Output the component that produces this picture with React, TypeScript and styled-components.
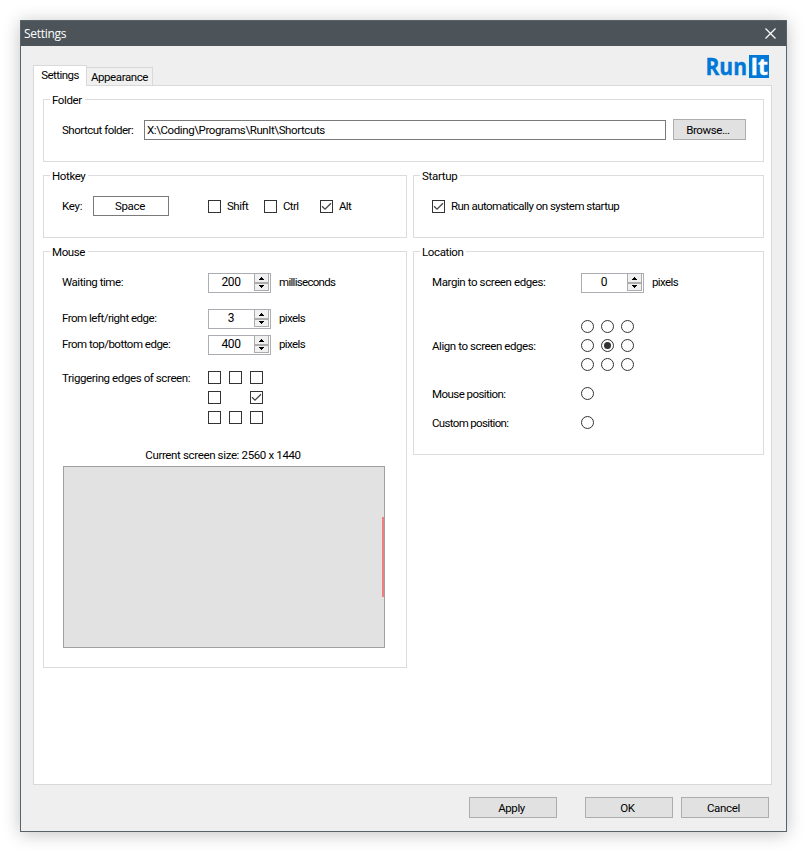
import React, { useState } from 'react';
import styled, { createGlobalStyle, css } from 'styled-components';

const GlobalStyle = createGlobalStyle`
  * { box-sizing: border-box; }
  body { margin: 0; background: #fff; }
  #root { height: 852px; }
`;

const Desktop = styled.div`
  width: 807px;
  height: 852px;
  padding: 20px 20px 20px;
  overflow: hidden;
  background: #fff;
  color: #000;
  font: 11.5px/15px Roboto, 'Liberation Sans', sans-serif;
`;

const Window = styled.main`
  display: flex;
  flex-direction: column;
  width: 767px;
  height: 812px;
  border: 1px solid #56636a;
  background: #efefef;
  box-shadow: 0 2px 17px rgba(0, 0, 0, 0.24);
`;

const TitleBar = styled.header`
  display: flex;
  flex: none;
  align-items: center;
  justify-content: space-between;
  height: 25px;
  padding: 0 10px 0 3px;
  background: #4c545a;
  color: #fff;
  font: 12px/20px 'Open Sans', sans-serif;
  letter-spacing: -0.3px;
`;

const CloseButton = styled.button`
  display: flex;
  margin-top: -1px;
  padding: 0;
  border: 0;
  background: none;
  color: #fff;
`;

const TabStrip = styled.nav`
  display: flex;
  flex: none;
  align-items: flex-end;
  height: 40px;
  margin: 0 15px 0 12px;
`;

const Tab = styled.button<{ $active?: boolean; $track: number }>`
  height: 18px;
  width: 66px;
  margin-bottom: 1px;
  padding: 2px 0 0;
  border: 1px solid #d9d9d9;
  border-width: 1px 1px 0 0;
  background: #f0f0f0;
  color: #000;
  font: inherit;
  letter-spacing: ${p => p.$track}px;
  ${p => p.$active && css`
    position: relative;
    z-index: 1;
    height: 21px;
    width: 54px;
    margin-bottom: 0;
    padding: 0 0 1px;
    border-width: 1px 1px 0 1px;
    background: #fff;
  `}
`;

const LogoSlot = styled.div`
  display: flex;
  align-self: flex-start;
  margin: 9px 1px 0 auto;
`;

const Panel = styled.section`
  display: flex;
  flex: none;
  flex-direction: column;
  gap: 13px;
  width: 739px;
  height: 700px;
  margin: -1px 0 0 12px;
  padding: 13px 7px 0 9px;
  border: 1px solid #d9d9d9;
  background: #fff;
`;

const Columns = styled.div`
  display: grid;
  grid-template-columns: 364px 351px;
  align-items: start;
  gap: 13px 6px;
`;

const Group = styled.section<{ $height: number }>`
  height: ${p => p.$height}px;
  border: 1px solid #dcdcdc;
`;

const Legend = styled.h2<{ $track?: number }>`
  width: fit-content;
  height: 15px;
  margin: -8px 0 0 6px;
  padding: 1px 3px 0 2px;
  background: #fff;
  font: inherit;
  letter-spacing: ${p => p.$track ?? -0.38}px;
`;

const Row = styled.div<{ $top: number; $height?: number }>`
  display: flex;
  align-items: center;
  height: ${p => p.$height ?? 20}px;
  margin-top: ${p => p.$top}px;
  padding-left: 18px;
`;

const Label = styled.span<{ $width?: number; $track?: number }>`
  flex: none;
  width: ${p => (p.$width ? `${p.$width}px` : 'auto')};
  letter-spacing: ${p => p.$track ?? -0.5}px;
  white-space: pre;
`;

const SpinLabel = styled(Label)`
  margin-top: -1px;
`;

const OptionLabel = styled(Label)`
  padding-top: 1px;
`;

const Unit = styled(SpinLabel)`
  margin-left: 8px;
`;

const PathInput = styled.input`
  width: 522px;
  height: 20px;
  padding: 0 2px 1px;
  border: 1px solid #7a7a7a;
  background: #fff;
  color: #000;
  font: inherit;
  letter-spacing: -0.4px;
  outline: 0;
`;

const KeyInput = styled.input`
  width: 76px;
  height: 20px;
  padding: 0 2px 1px 0;
  border: 1px solid #7a7a7a;
  background: #fff;
  color: #000;
  font: inherit;
  letter-spacing: -0.3px;
  text-align: center;
  outline: 0;
`;

const Button = styled.button<{ $width: number; $track?: number }>`
  width: ${p => p.$width}px;
  height: 21px;
  padding: 1px 3px 0 0;
  border: 1px solid #adadad;
  background: #e1e1e1;
  color: #000;
  font: inherit;
  letter-spacing: ${p => p.$track ?? -0.42}px;
`;

const BrowseButton = styled(Button)`
  margin: -1px 0 0 7px;
`;

const KeyOption = styled.label<{ $width: number }>`
  display: flex;
  align-items: center;
  gap: 6px;
  height: 16px;
  width: ${p => p.$width}px;
  white-space: nowrap;
`;

const Box = styled.span`
  display: flex;
  flex: none;
  width: 13px;
  height: 13px;
  border: 1px solid #333;
  background: #fff;
`;

const Radio = styled.button`
  display: flex;
  width: 13px;
  height: 13px;
  padding: 0;
  border: 0;
  background: none;
`;

const SpinFrame = styled.div`
  display: flex;
  width: 63px;
  height: 20px;
  padding: 0 1px 1px 0;
  border: 1px solid #abadb3;
  background: #fff;
`;

const SpinValue = styled.span`
  flex: 1;
  padding-right: 1px;
  line-height: 17px;
  font-size: 12px;
  letter-spacing: -0.4px;
  text-align: center;
`;

const SpinButtons = styled.span`
  display: flex;
  flex-direction: column;
  width: 15px;
`;

const SpinButton = styled.button<{ $down?: boolean }>`
  display: flex;
  align-items: center;
  justify-content: center;
  width: 15px;
  height: ${p => (p.$down ? 8 : 9)}px;
  padding: ${p => (p.$down ? '0 0 1px' : '1px 0 0')};
  border: 1px solid #acacac;
  border-top-width: ${p => (p.$down ? 1 : 0)}px;
  background: #f0f0f0;
`;

const EdgeGrid = styled.div`
  display: grid;
  grid-template-columns: repeat(3, 13px);
  gap: 7px 8px;
`;

const AlignGrid = styled.div`
  display: grid;
  grid-template-columns: repeat(3, 13px);
  gap: 6px 7px;
`;

const ScreenCaption = styled.p`
  width: 322px;
  margin: 24px 0 0 18px;
  text-align: center;
  letter-spacing: -0.36px;
`;

const ScreenPreview = styled.div`
  display: flex;
  align-items: flex-start;
  justify-content: flex-end;
  width: 322px;
  height: 182px;
  margin: 3px 0 0 19px;
  border: 1px solid #a0a0a0;
  background: #e2e2e2;
`;

const EdgeMarker = styled.span`
  width: 2px;
  height: 80px;
  margin-top: 50px;
  background: #f08080;
`;

const Footer = styled.footer`
  display: flex;
  justify-content: flex-end;
  gap: 8px;
  padding: 12px 17px 0 0;
`;

const ApplyButton = styled(Button)`
  margin-right: 20px;
`;

function Check({ on }: { on?: boolean }) {
  return (
    <Box>
      {on && (
        <svg width="11" height="11" viewBox="0 0 11 11" fill="none" stroke="#444" strokeWidth="1.3">
          <path d="M1 5.3 L4 8.2 L10 2.2" />
        </svg>
      )}
    </Box>
  );
}

function Dial({ on, onClick }: { on?: boolean; onClick?: () => void }) {
  return (
    <Radio onClick={onClick}>
      <svg width="13" height="13" viewBox="0 0 13 13">
        <circle cx="6.5" cy="6.5" r="6" fill="#fff" stroke="#333" />
        {on && <circle cx="6.5" cy="6.5" r="3.5" fill="#333" />}
      </svg>
    </Radio>
  );
}

function Spinner({ initial }: { initial: number }) {
  const [value, setValue] = useState(initial);
  return (
    <SpinFrame>
      <SpinValue>{value}</SpinValue>
      <SpinButtons>
        <SpinButton onClick={() => setValue(value + 1)}>
          <svg width="5" height="3" viewBox="0 0 5 3" shapeRendering="crispEdges"><path d="M2 0h1v1h1v1h1v1H0V2h1V1h1z" /></svg>
        </SpinButton>
        <SpinButton $down onClick={() => setValue(value - 1)}>
          <svg width="5" height="3" viewBox="0 0 5 3" shapeRendering="crispEdges"><path d="M0 0h5v1H4v1H3v1H2V2H1V1H0z" /></svg>
        </SpinButton>
      </SpinButtons>
    </SpinFrame>
  );
}

function Logo() {
  return (
    <svg width="64" height="24" viewBox="0 0 64 24" overflow="visible" fontFamily="'Open Sans', 'Noto Sans', sans-serif" fontWeight="700" fontSize="24">
      <text x="-0.5" y="20" fill="#0078d7" stroke="#0078d7" strokeWidth="0.4" textLength="41.5" lengthAdjust="spacingAndGlyphs">Run</text>
      <path d="M43 0h20v23H43z" fill="#0078d7" />
      <text x="44.5" y="20" fill="#fff" stroke="#fff" strokeWidth="0.4" textLength="17.5" lengthAdjust="spacingAndGlyphs">It</text>
    </svg>
  );
}

const EDGES = [false, false, false, false, null, true, false, false, false];

export default function App() {
  const [location, setLocation] = useState(4);
  return (
    <Desktop>
      <GlobalStyle />
      <Window>
        <TitleBar>
          Settings
          <CloseButton>
            <svg width="11" height="11" viewBox="0 0 11 11" stroke="currentColor" strokeWidth="1.2">
              <path d="M.5.5l10 10M10.5.5l-10 10" />
            </svg>
          </CloseButton>
        </TitleBar>
        <TabStrip>
          <Tab $active $track={-0.55}>Settings</Tab>
          <Tab $track={-0.4}>Appearance</Tab>
          <LogoSlot><Logo /></LogoSlot>
        </TabStrip>
        <Panel>
          <Group $height={63}>
            <Legend>Folder</Legend>
            <Row $top={13}>
              <Label $width={82} $track={-0.5}>Shortcut folder:</Label>
              <PathInput defaultValue={'X:\\Coding\\Programs\\RunIt\\Shortcuts'} />
              <BrowseButton $width={73}>Browse...</BrowseButton>
            </Row>
          </Group>
          <Columns>
            <Group $height={63}>
              <Legend>Hotkey</Legend>
              <Row $top={13}>
                <Label $width={31} $track={-0.3}>Key:</Label>
                <KeyInput defaultValue="Space" />
                <Label $width={39} />
                <KeyOption $width={56}><Check /><OptionLabel>Shift</OptionLabel></KeyOption>
                <KeyOption $width={56}><Check /><OptionLabel $track={-0.65}>Ctrl</OptionLabel></KeyOption>
                <KeyOption $width={56}><Check on /><OptionLabel $track={-0.65}>Alt</OptionLabel></KeyOption>
              </Row>
            </Group>
            <Group $height={63}>
              <Legend $track={-0.3}>Startup</Legend>
              <Row $top={13}>
                <KeyOption $width={200}><Check on /><OptionLabel $track={-0.54}>Run automatically on system startup</OptionLabel></KeyOption>
              </Row>
            </Group>
            <Group $height={417}>
              <Legend>Mouse</Legend>
              <Row $top={14}>
                <SpinLabel $width={146} $track={-0.45}>Waiting time:</SpinLabel>
                <Spinner initial={200} />
                <Unit $track={-0.7}>milliseconds</Unit>
              </Row>
              <Row $top={16}>
                <SpinLabel $width={146}>From left/right edge:</SpinLabel>
                <Spinner initial={3} />
                <Unit $track={-0.6}>pixels</Unit>
              </Row>
              <Row $top={6}>
                <SpinLabel $width={146}>From top/bottom edge:</SpinLabel>
                <Spinner initial={400} />
                <Unit $track={-0.6}>pixels</Unit>
              </Row>
              <Row $top={17} $height={13}>
                <Label $width={146} $track={-0.4}>Triggering edges of screen:</Label>
              </Row>
              <Row $top={-14} $height={53}>
                <Label $width={146} />
                <EdgeGrid>
                  {EDGES.map((edge, i) => (edge === null ? <span key={i} /> : <Check key={i} on={edge} />))}
                </EdgeGrid>
              </Row>
              <ScreenCaption>Current screen size: 2560 x 1440</ScreenCaption>
              <ScreenPreview><EdgeMarker /></ScreenPreview>
            </Group>
            <Group $height={204}>
              <Legend>Location</Legend>
              <Row $top={14}>
                <SpinLabel $width={149} $track={-0.4}>Margin to screen edges:</SpinLabel>
                <Spinner initial={0} />
                <Unit $track={-0.6}>pixels</Unit>
              </Row>
              <Row $top={27} $height={51}>
                <OptionLabel $width={149} $track={-0.42}>Align to screen edges:</OptionLabel>
                <AlignGrid>
                  {Array.from({ length: 9 }, (_, i) => (
                    <Dial key={i} on={location === i} onClick={() => setLocation(i)} />
                  ))}
                </AlignGrid>
              </Row>
              <Row $top={16} $height={13}>
                <OptionLabel $width={149} $track={-0.55}>Mouse position:</OptionLabel>
                <Dial on={location === 9} onClick={() => setLocation(9)} />
              </Row>
              <Row $top={16} $height={13}>
                <OptionLabel $width={149} $track={-0.66}>Custom position:</OptionLabel>
                <Dial on={location === 10} onClick={() => setLocation(10)} />
              </Row>
            </Group>
          </Columns>
        </Panel>
        <Footer>
          <ApplyButton $width={88}>Apply</ApplyButton>
          <Button $width={88}>OK</Button>
          <Button $width={88} $track={-0.32}>Cancel</Button>
        </Footer>
      </Window>
    </Desktop>
  );
}
